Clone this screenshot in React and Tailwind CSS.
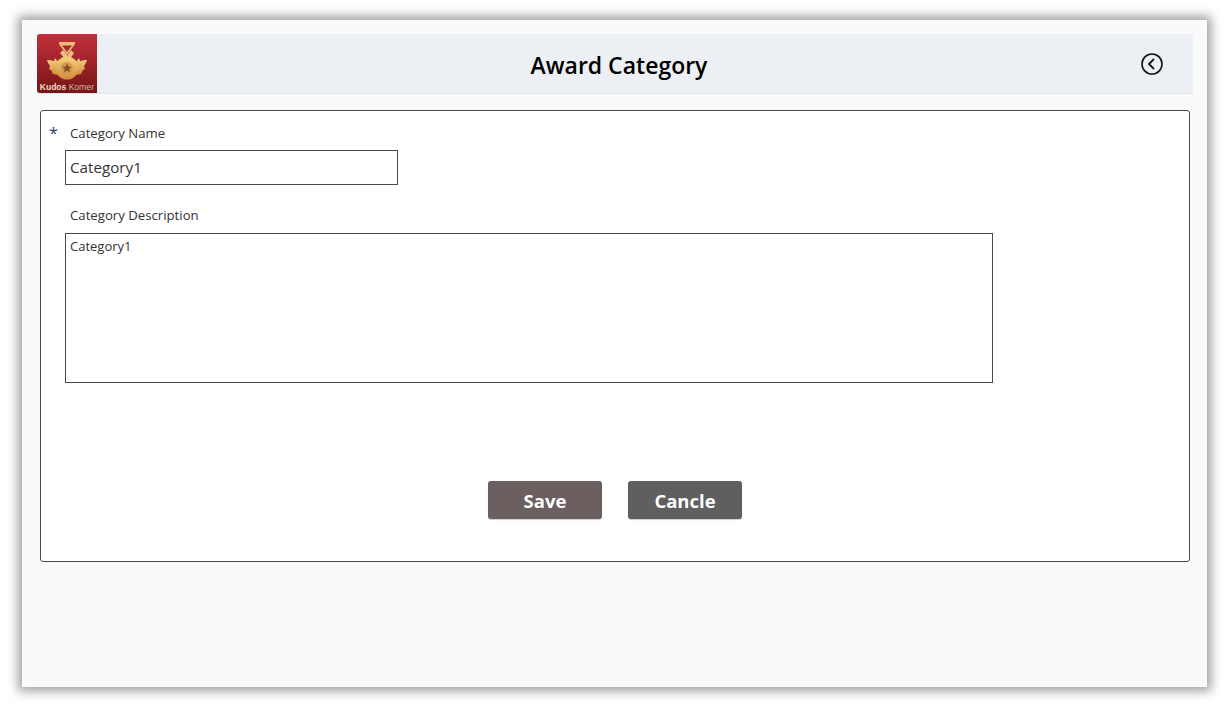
function KudosLogo() {
  return (
    <div className="w-[60px] h-[59px] shrink-0 rounded-l-[3px] bg-gradient-to-b from-[#c5303d] to-[#751517] flex flex-col items-center">
      <svg width="44" height="45" viewBox="0 0 44 45" className="mt-[7px]">
        <defs>
          <linearGradient id="gold" x1="0" y1="0" x2="0" y2="1">
            <stop offset="0" stopColor="#f5d27e" />
            <stop offset="1" stopColor="#d08a3c" />
          </linearGradient>
        </defs>
        {/* ribbon */}
        <path d="M14 1h16v2l-8 11-8-11z" fill="#eebd78" />
        <path d="M17 4.500h10l-5 6.500z" fill="#a92a30" />
        <path d="M15 12l3-3 7 9-3 2zM29 12l-3-3-4 6 3 3z" fill="#ecc07c" />
        {/* wings */}
        <path d="M2 19c3 0 5 .5 7 1l1-3 4 5-1 12-5-1-2-4-2-1 1-3-2-3z" fill="url(#gold)" />
        <path d="M42 19c-3 0-5 .5-7 1l-1-3-4 5 1 12 5-1 2-4 2-1-1-3 2-3z" fill="url(#gold)" />
        {/* medal */}
        <circle cx="22" cy="27" r="11.500" fill="url(#gold)" />
        <circle cx="22" cy="27" r="6" fill="#d59a4c" />
        <path d="M22 22.500l1.400 3 3.200.4-2.400 2.200.7 3.200-2.900-1.700-2.900 1.700.7-3.200-2.400-2.200 3.200-.4z" fill="#8c4a2a" />
      </svg>
      <p className="mt-[-4px] text-[8.5px] leading-[11px] whitespace-nowrap font-['Liberation_Sans',sans-serif] text-[#d9b9a8]">
        <span className="font-bold text-[#f0dcc8]">Kudos</span> Korner
      </p>
    </div>
  );
}

export default function App() {
  return (
    <div className="w-[1228px] h-[710px] bg-white pt-5 pl-[22px] overflow-hidden font-['Open_Sans',sans-serif]">
      <div className="w-[1185px] h-[667px] bg-[#fafafa] shadow-[0_0_10px_4px_rgba(0,0,0,0.38)] pt-[14px] pl-[15px]">
        {/* Header */}
        <div className="w-[1156px] h-[60px] flex bg-[#eceff3] rounded-[3px] border-b border-[#e2e4e6]">
          <KudosLogo />
          <h1 className="flex-1 pt-px text-center text-[23px] leading-[60px] font-semibold text-black">Award Category</h1>
          <div className="w-[52px] shrink-0 pt-[19px]">
            <svg width="22" height="22" viewBox="0 0 22 22" fill="none" stroke="#111" strokeWidth="1.6">
              <circle cx="11" cy="11" r="10" />
              <path d="M13 6l-5 5 5 5" strokeWidth="1.8" />
            </svg>
          </div>
        </div>

        {/* Form card */}
        <div className="w-[1150px] h-[452px] ml-[3px] mt-[16px] bg-white border border-[#4a4a4a] rounded-[3px] pl-[25px] pt-[12px]">
          <div className="relative">
            <span className="absolute left-[-17px] top-0 text-[16px] leading-[20px] text-[#2f3a6b]">*</span>
            <label className="block pl-[4px] text-[13.2px] leading-[20px] text-[#333]">Category Name</label>
          </div>
          <div className="w-[333px] h-[35px] ml-[-1px] mt-[7px] border border-[#4a4a4a] bg-white pl-[4px] text-[15.2px] leading-[33px] text-[#333]">Category1</div>
          <label className="block mt-[20px] pl-[4px] text-[13.2px] leading-[20px] text-[#333]">Category Description</label>
          <div className="w-[928px] h-[150px] ml-[-1px] mt-[8px] border border-[#4a4a4a] bg-white pl-[4px] pt-[2px] text-[13px] leading-[20px] text-[#333]">Category1</div>
          <div className="flex gap-[26px] mt-[98px] ml-[422px]">
            <button className="w-[114px] h-[38px] pt-px rounded-[3px] bg-[#6b5f5f] text-white text-[18.500px] font-bold shadow-[0_1px_1px_rgba(0,0,0,0.2)]">Save</button>
            <button className="w-[114px] h-[38px] pt-px rounded-[3px] bg-[#5f5f5f] text-white text-[18.500px] font-bold shadow-[0_1px_1px_rgba(0,0,0,0.2)]">Cancle</button>
          </div>
        </div>
      </div>
    </div>
  );
}
